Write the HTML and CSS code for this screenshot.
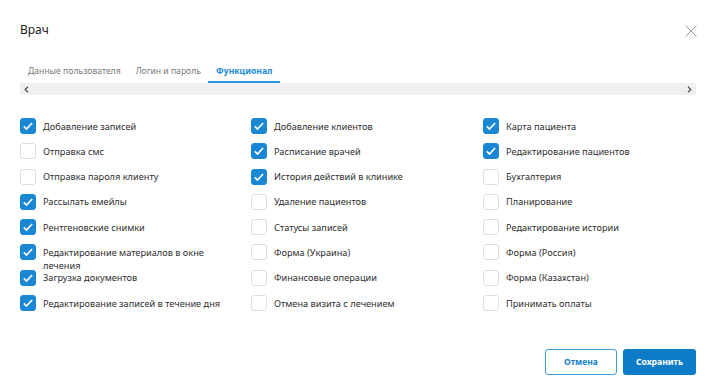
FILE: index.html
```html
<!DOCTYPE html>
<html lang="ru">
<head>
  <meta charset="UTF-8" />
  <meta name="viewport" content="width=device-width, initial-scale=1" />
  <title>Врач</title>
  <link rel="stylesheet" href="styles.css">
</head>
<body>

  <div class="modal">
    <div class="modal-header">
      <h2 class="modal-title">Врач</h2>
      <button class="close" type="button" aria-label="Закрыть">
        <svg width="12" height="12" viewBox="0 0 12 12"><path d="M0.5 0.5l11 11M11.5 0.5l-11 11" stroke="#9a9a9a" stroke-width="1" fill="none"/></svg>
      </button>
    </div>

    <div class="tabs">
      <a class="tab" href="#">Данные пользователя</a>
      <a class="tab" href="#">Логин и пароль</a>
      <a class="tab active" href="#">Функционал</a>
    </div>
    <div class="tab-scroll">
      <svg width="5" height="7" viewBox="0 0 5 7"><path d="M4 0.8L1.2 3.5 4 6.2" stroke="#555" stroke-width="1.3" fill="none"/></svg>
      <svg width="5" height="7" viewBox="0 0 5 7"><path d="M1 0.8L3.8 3.5 1 6.2" stroke="#555" stroke-width="1.3" fill="none"/></svg>
    </div>

    <div class="perms">
      <label class="perm"><span class="box checked"></span><span class="perm-text">Добавление записей</span></label>
      <label class="perm"><span class="box"></span><span class="perm-text">Отправка смс</span></label>
      <label class="perm"><span class="box"></span><span class="perm-text">Отправка пароля клиенту</span></label>
      <label class="perm"><span class="box checked"></span><span class="perm-text">Рассылать емейлы</span></label>
      <label class="perm"><span class="box checked"></span><span class="perm-text">Рентгеновские снимки</span></label>
      <label class="perm"><span class="box checked"></span><span class="perm-text">Редактирование материалов в окне лечения</span></label>
      <label class="perm"><span class="box checked"></span><span class="perm-text">Загрузка документов</span></label>
      <label class="perm"><span class="box checked"></span><span class="perm-text">Редактирование записей в течение дня</span></label>

      <label class="perm"><span class="box checked"></span><span class="perm-text">Добавление клиентов</span></label>
      <label class="perm"><span class="box checked"></span><span class="perm-text">Расписание врачей</span></label>
      <label class="perm"><span class="box checked"></span><span class="perm-text">История действий в клинике</span></label>
      <label class="perm"><span class="box"></span><span class="perm-text">Удаление пациентов</span></label>
      <label class="perm"><span class="box"></span><span class="perm-text">Статусы записей</span></label>
      <label class="perm"><span class="box"></span><span class="perm-text">Форма (Украина)</span></label>
      <label class="perm"><span class="box"></span><span class="perm-text">Финансовые операции</span></label>
      <label class="perm"><span class="box"></span><span class="perm-text">Отмена визита с лечением</span></label>

      <label class="perm"><span class="box checked"></span><span class="perm-text">Карта пациента</span></label>
      <label class="perm"><span class="box checked"></span><span class="perm-text">Редактирование пациентов</span></label>
      <label class="perm"><span class="box"></span><span class="perm-text">Бухгалтерия</span></label>
      <label class="perm"><span class="box"></span><span class="perm-text">Планирование</span></label>
      <label class="perm"><span class="box"></span><span class="perm-text">Редактирование истории</span></label>
      <label class="perm"><span class="box"></span><span class="perm-text">Форма (Россия)</span></label>
      <label class="perm"><span class="box"></span><span class="perm-text">Форма (Казахстан)</span></label>
      <label class="perm"><span class="box"></span><span class="perm-text">Принимать оплаты</span></label>
    </div>

    <div class="modal-footer">
      <button class="btn btn-outline" type="button">Отмена</button>
      <button class="btn btn-primary" type="button">Сохранить</button>
    </div>
  </div>

</body>
</html>
```

FILE: styles.css
```css
body {
  margin: 0;
  background: #fff;
  font-family: "Noto Sans", "Open Sans", sans-serif;
  color: #333;
}
.modal {
  width: 716px;
  height: 392px;
  box-sizing: border-box;
  padding: 22px 20px 0;
}
.modal-header {
  display: flex;
  justify-content: space-between;
  align-items: center;
  height: 16px;
}
.modal-title {
  margin: 0;
  font-size: 12px;
  font-weight: normal;
  line-height: 16px;
  color: #222;
}
.close {
  border: none;
  background: none;
  padding: 0;
  margin-right: -1px;
  margin-top: 2px;
  display: flex;
  cursor: pointer;
}

/* Tabs */
.tabs {
  display: flex;
  margin-top: 26px;
}
.tab {
  padding: 0 8px 3px;
  font-size: 8.6px;
  line-height: 14px;
  color: #7a7a7a;
  text-decoration: none;
  border-bottom: 2px solid transparent;
}
.tab + .tab {
  margin-left: -1px;
}
.tab.active {
  color: #1c8ad6;
  font-weight: bold;
  border-bottom-color: #2796dc;
}
.tab-scroll {
  height: 12px;
  background: #f0f0f0;
  display: flex;
  justify-content: space-between;
  align-items: center;
  padding: 0 4px;
}

/* Permissions */
.perms {
  display: grid;
  grid-template-columns: 231px 232px 1fr;
  grid-template-rows: repeat(8, 25.3px);
  grid-auto-flow: column;
  margin-top: 19px;
}
.perm {
  display: flex;
  align-items: flex-start;
  gap: 7px;
  padding-top: 4px;
  font-size: 9.2px;
  cursor: pointer;
}
.box {
  flex: none;
  width: 16px;
  height: 16px;
  box-sizing: border-box;
  border: 1px solid #dedede;
  border-radius: 3px;
  background: #fff;
}
.box.checked {
  border-color: #1a87d4;
  background: #1a87d4 url("data:image/svg+xml,%3Csvg xmlns='http://www.w3.org/2000/svg' width='16' height='16'%3E%3Cpath d='M3.8 8.3l2.7 2.7 5.6-6' stroke='white' stroke-width='1.7' fill='none'/%3E%3C/svg%3E") center / 16px 16px no-repeat;
}
.perm-text {
  max-width: 180px;
  line-height: 13px;
  padding-top: 1.5px;
  color: #2e2e2e;
}

/* Footer */
.modal-footer {
  display: flex;
  justify-content: flex-end;
  gap: 6px;
  margin-top: 33px;
}
.btn {
  height: 26px;
  width: 72px;
  font-family: inherit;
  font-size: 8.6px;
  font-weight: bold;
  border-radius: 3px;
  cursor: pointer;
}
.btn-outline {
  background: #fff;
  color: #1a80c8;
  border: 1px solid #3f9ddb;
}
.btn-primary {
  width: 73px;
  background: #0d7cc6;
  color: #fff;
  border: none;
}
```
